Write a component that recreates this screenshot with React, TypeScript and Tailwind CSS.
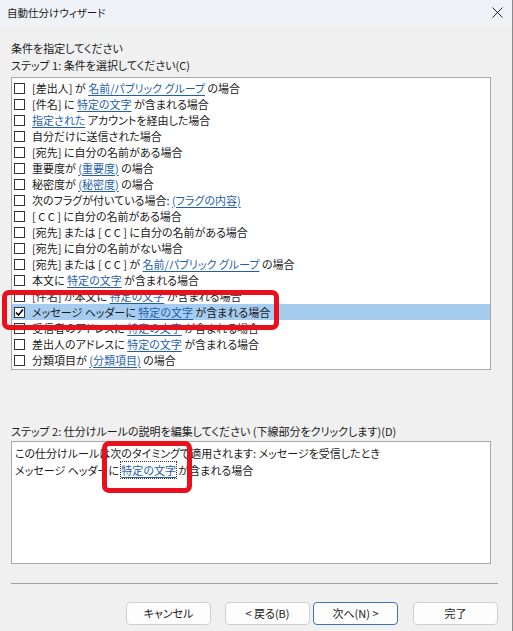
import React from "react";

type Seg = { t: string; link?: boolean };

const rows: Seg[][] = [
  [{ t: "[差出人] が " }, { t: "名前/パブリック グループ", link: true }, { t: " の場合" }],
  [{ t: "[件名] に " }, { t: "特定の文字", link: true }, { t: " が含まれる場合" }],
  [{ t: "指定された", link: true }, { t: " アカウントを経由した場合" }],
  [{ t: "自分だけに送信された場合" }],
  [{ t: "[宛先] に自分の名前がある場合" }],
  [{ t: "重要度が " }, { t: "(重要度)", link: true }, { t: " の場合" }],
  [{ t: "秘密度が " }, { t: "(秘密度)", link: true }, { t: " の場合" }],
  [{ t: "次のフラグが付いている場合: " }, { t: "(フラグの内容)", link: true }],
  [{ t: "[ C C ] に自分の名前がある場合" }],
  [{ t: "[宛先] または [ C C ] に自分の名前がある場合" }],
  [{ t: "[宛先] に自分の名前がない場合" }],
  [{ t: "[宛先] または [ C C ] が " }, { t: "名前/パブリック グループ", link: true }, { t: " の場合" }],
  [{ t: "本文に " }, { t: "特定の文字", link: true }, { t: " が含まれる場合" }],
  [{ t: "[件名] か本文に " }, { t: "特定の文字", link: true }, { t: " が含まれる場合" }],
  [{ t: "メッセージ ヘッダーに " }, { t: "特定の文字", link: true }, { t: " が含まれる場合" }],
  [{ t: "受信者のアドレスに " }, { t: "特定の文字", link: true }, { t: " が含まれる場合" }],
  [{ t: "差出人のアドレスに " }, { t: "特定の文字", link: true }, { t: " が含まれる場合" }],
  [{ t: "分類項目が " }, { t: "(分類項目)", link: true }, { t: " の場合" }],
];

function Checkbox({ checked }: { checked?: boolean }) {
  return (
    <span className="w-[11px] h-[11px] border border-[#333333] bg-white flex items-center justify-center shrink-0">
      {checked && (
        <svg width="9" height="9" viewBox="0 0 9 9">
          <polyline points="1,4.5 3.5,7 8,1.5" fill="none" stroke="#000" strokeWidth="1.6" />
        </svg>
      )}
    </span>
  );
}

function Btn({ label, focused }: { label: string; focused?: boolean }) {
  return (
    <div
      className={
        "w-[85px] h-[23px] rounded-[4px] bg-[#fdfdfd] flex items-center justify-center text-[11px] text-[#1a1a1a] border " +
        (focused ? "border-[#3f75b8]" : "border-[#d0d0d0]")
      }
    >
      {label}
    </div>
  );
}

export default function App() {
  return (
    <div
      className="w-[513px] h-[631px] bg-[#f0f0f0] relative overflow-hidden flex flex-col text-[11px] text-[#1a1a1a] [font-feature-settings:'palt'] leading-[17px]"
      style={{ fontFamily: '"Noto Sans CJK JP", "Noto Sans", sans-serif' }}
    >
      {/* title bar */}
      <div className="h-[25px] bg-[#eff3f8] flex items-center justify-between pl-[7px] pr-[10px] shrink-0">
        <span className="text-[10.5px]">自動仕分けウィザード</span>
        <svg width="11" height="11" viewBox="0 0 11 11">
          <path d="M0.5 0.5 L10.5 10.5 M10.5 0.5 L0.5 10.5" stroke="#222" strokeWidth="1" />
        </svg>
      </div>

      <div className="pl-[11px] flex flex-col">
        <div className="mt-[15px] h-[17px]">条件を指定してください</div>
        <div className="h-[19px]">ステップ 1: 条件を選択してください(C)</div>
        <div className="mt-[1px] w-[480px] h-[293px] bg-white border border-[#a9a9a9] py-[2px] flex flex-col">
          {rows.map((segs, i) => {
            const sel = i === 14;
            return (
              <div
                key={i}
                className={"h-[16px] flex items-center gap-[7px] pl-[2px] " + (sel ? "bg-[#a6cdef]" : "")}
              >
                <Checkbox checked={sel} />
                <span className="whitespace-pre">
                  {segs.map((s, j) =>
                    s.link ? (
                      <span key={j} className="text-[#1f5fae] underline underline-offset-[2px]">
                        {s.t}
                      </span>
                    ) : (
                      <span key={j}>{s.t}</span>
                    )
                  )}
                </span>
              </div>
            );
          })}
        </div>

        <div className="mt-[52px] h-[18px] leading-[18px]">
          ステップ 2: 仕分けルールの説明を編集してください (下線部分をクリックします)(D)
        </div>
        <div className="mt-[1px] w-[480px] h-[123px] bg-white border border-[#a9a9a9] pt-[3px] pl-[3px] flex flex-col">
          <div className="whitespace-pre">この仕分けルールは次のタイミングで適用されます: メッセージを受信したとき</div>
          <div className="whitespace-pre">
            <span>メッセージ ヘッダーに </span>
            <span className="text-[#1f5fae] underline underline-offset-[2px] outline outline-1 outline-dotted outline-[#333]">
              特定の文字
            </span>
            <span> が含まれる場合</span>
          </div>
        </div>

        <div className="mt-[19px] w-[487px] h-[1px] bg-[#a0a0a0]" />

        <div className="mt-[18px] w-[487px] flex items-center justify-end">
          <Btn label="キャンセル" />
          <div className="w-[14px]" />
          <Btn label="< 戻る(B)" />
          <div className="w-[3px]" />
          <Btn label="次へ(N) >" focused />
          <div className="w-[15px]" />
          <Btn label="完了" />
        </div>
      </div>

      {/* right edge line */}
      <div className="absolute right-0 top-0 bottom-0 w-[1px] bg-[#8a8a8a]" />

      {/* red annotation boxes */}
      <div className="absolute left-[2px] top-[290px] w-[277px] h-[40px] border-[5px] border-[#e8101a] rounded-[7px]" />
      <div className="absolute left-[102px] top-[441px] w-[90px] h-[52px] border-[5px] border-[#e8101a] rounded-[7px]" />
    </div>
  );
}
